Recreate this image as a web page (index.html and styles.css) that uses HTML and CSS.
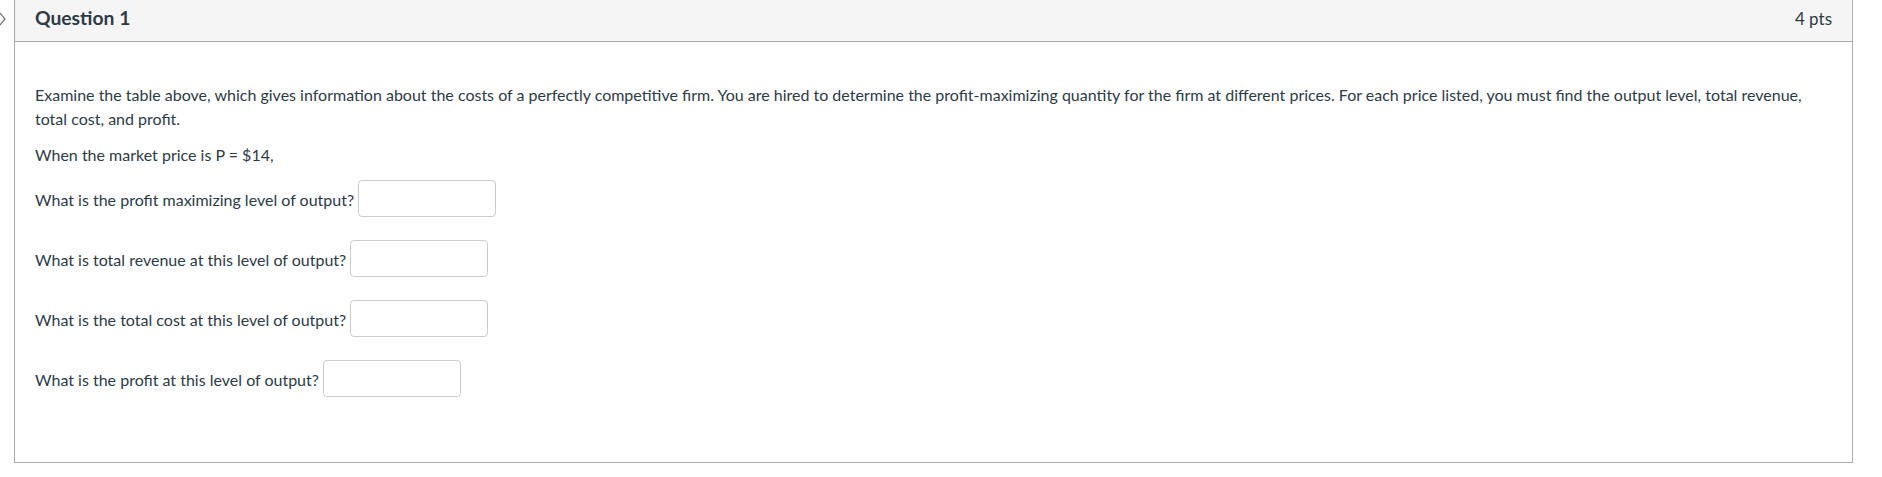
FILE: index.html
```html
<!DOCTYPE html>
<html lang="en">
<head>
<meta charset="utf-8">
<title>Question 1</title>
<link rel="stylesheet" href="styles.css">
</head>
<body>
<div class="page">
  <div class="gutter">
    <svg class="chevron" width="14" height="41" viewBox="0 0 14 41" aria-hidden="true">
      <polyline points="-1,12 5,19 -1,26" fill="none" stroke="#6b6b6b" stroke-width="1.2"/>
    </svg>
  </div>
  <div class="question">
    <div class="q-header">
      <span class="q-title">Question 1</span>
      <span class="q-pts">4 pts</span>
    </div>
    <div class="q-content">
      <p class="intro">Examine the table above, which gives information about the costs of a perfectly competitive firm. You are hired to determine the profit-maximizing quantity for the firm at different prices. For each price listed, you must find the output level, total revenue, total cost, and profit.</p>
      <p class="intro">When the market price is P = $14,</p>
      <div class="answers">
        <div class="row"><span class="label">What is the profit maximizing level of output?</span><input class="field" type="text"></div>
        <div class="row"><span class="label">What is total revenue at this level of output?</span><input class="field" type="text"></div>
        <div class="row"><span class="label">What is the total cost at this level of output?</span><input class="field" type="text"></div>
        <div class="row"><span class="label">What is the profit at this level of output?</span><input class="field" type="text"></div>
      </div>
    </div>
  </div>
</div>
</body>
</html>
```

FILE: styles.css
```css
html, body {
  margin: 0;
  padding: 0;
  background: #ffffff;
}

body {
  font-family: Lato, "Open Sans", "Liberation Sans", sans-serif;
  color: #2d3b45;
}

.page {
  display: flex;
  align-items: flex-start;
  width: 1882px;
}

.gutter {
  width: 14px;
  flex: 0 0 14px;
  overflow: hidden;
}

.chevron {
  display: block;
}

.question {
  width: 1839px;
  box-sizing: border-box;
  border: 1px solid #a9abad;
  border-top: none;
}

.q-header {
  height: 42px;
  box-sizing: border-box;
  background: #f5f5f5;
  border-bottom: 1px solid #a9abad;
  padding: 6px 20px 0 20px;
  display: flex;
  justify-content: space-between;
  align-items: baseline;
  line-height: 1.2;
}

.q-title {
  font-size: 19.3px;
  font-weight: 700;
}

.q-pts {
  font-size: 17px;
  font-weight: 400;
}

.q-content {
  padding: 41px 20px 65px 20px;
}

.intro {
  margin: 0 0 12px 0;
  font-size: 16px;
  line-height: 24px;
}

.answers {
  padding-top: 1px;
  display: flex;
  flex-direction: column;
  gap: 23px;
}

.row {
  display: flex;
  align-items: flex-start;
  gap: 4px;
  height: 37px;
}

.label {
  font-size: 16px;
  line-height: 24px;
  padding-top: 8px;
}

.field {
  width: 138px;
  height: 37px;
  box-sizing: border-box;
  border: 1px solid #c7cdd1;
  border-radius: 4px;
  background: #ffffff;
  margin: 0;
  padding: 0 8px;
  font: inherit;
}
```
